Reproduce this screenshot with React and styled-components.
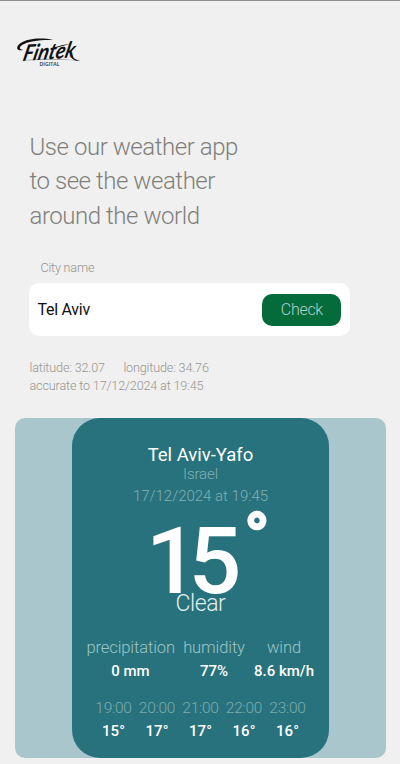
import React from "react";
import styled, { createGlobalStyle } from "styled-components";

const GlobalStyle = createGlobalStyle`
  * { box-sizing: border-box; }
  body { margin: 0; background: #f0f0f0; font-family: Roboto, sans-serif; font-weight: 300; }
  h1, p { margin: 0; font-weight: inherit; }
`;

const Page = styled.div`
  height: 764px;
  overflow: hidden;
  border-top: 1px solid #8d8d8d;
  background: #f0f0f0;
  display: flex;
  flex-direction: column;
`;

const Header = styled.header`
  height: 129px;
  padding: 33px 0 0 14px;
`;

const LogoArt = styled.svg`
  display: block;
  width: 70px;
  height: 36px;
  overflow: visible;
`;

const Intro = styled.section`
  padding-left: 29.5px;
`;

const Title = styled.h1`
  width: 240px;
  height: 103px;
  font-size: 24px;
  line-height: 34.3px;
  letter-spacing: -0.45px;
  color: #7f7f7a;
`;

const Form = styled.form`
  width: 321px;
  margin: 24px 0 0 29.4px;
`;

const Label = styled.label`
  display: block;
  padding-left: 11px;
  height: 26px;
  line-height: 21px;
  font-size: 12.6px;
  letter-spacing: -0.18px;
  color: #93938e;
`;

const SearchBox = styled.div`
  height: 53px;
  border-radius: 10px;
  background: #fff;
  display: flex;
  align-items: center;
  padding: 0 9px 0 8px;
`;

const CityInput = styled.input`
  flex: 1;
  min-width: 0;
  border: 0;
  padding: 0;
  outline: none;
  background: transparent;
  font: 400 16px Roboto, sans-serif;
  letter-spacing: -0.25px;
  color: #111;
`;

const CheckButton = styled.button`
  width: 79px;
  height: 32px;
  border: 0;
  padding: 0;
  border-radius: 10px;
  background: #046c3b;
  color: #b4cfcf;
  font: 300 16px Roboto, sans-serif;
  letter-spacing: -0.3px;
`;

const Meta = styled.section`
  padding: 23px 0 0 29.5px;
  height: 82px;
  font-size: 12.6px;
  line-height: 18.3px;
  letter-spacing: -0.15px;
  color: #969691;
`;

const Coordinates = styled.div`
  display: flex;
  gap: 18.5px;
`;

const Backdrop = styled.section`
  width: 371px;
  height: 339.5px;
  margin-left: 15px;
  border-radius: 10px;
  background: #a9c6cc;
  display: flex;
  justify-content: center;
`;

const Card = styled.article`
  width: 257px;
  height: 339.5px;
  border-radius: 28px;
  background: #27727c;
  color: #fff;
  padding-top: 27px;
  display: flex;
  flex-direction: column;
  align-items: center;
  text-align: center;
`;

const City = styled.p`
  font-size: 18.5px;
  font-weight: 400;
  line-height: 20px;
`;

const Country = styled.p`
  font-size: 15px;
  line-height: 18px;
  letter-spacing: -0.1px;
  color: #82b0b4;
`;

const Timestamp = styled.p`
  margin-top: 3px;
  font-size: 15px;
  line-height: 20px;
  color: #82b0b4;
`;

const Temperature = styled.div`
  display: flex;
  height: 84px;
  margin-top: 1px;
  padding-left: 14px;
  font-size: 93px;
  line-height: 110px;
  font-weight: 500;
  letter-spacing: -10px;
`;

const Degree = styled.span`
  margin-left: 13px;
  font-size: 65px;
  line-height: 60px;
  letter-spacing: 0;
  -webkit-text-stroke: 2.4px #fff;
`;

const Condition = styled.p`
  font-size: 23px;
  line-height: 26px;
  letter-spacing: -0.45px;
  color: #e4eff0;
`;

const Stats = styled.div`
  display: flex;
  gap: 8px;
  margin-top: 19px;
`;

const Stat = styled.div`
  width: ${(p) => p.$width}px;
  white-space: nowrap;
`;

const StatLabel = styled.p`
  font-size: 16.5px;
  line-height: 24px;
  letter-spacing: -0.1px;
  color: #9fc5c8;
`;

const Value = styled.p`
  font-size: 15px;
  line-height: 23px;
  font-weight: 500;
`;

const Hours = styled.div`
  display: flex;
  margin-top: 14px;
`;

const Hour = styled.div`
  width: 43.5px;
`;

const HourLabel = styled.p`
  font-size: 15.5px;
  line-height: 23px;
  letter-spacing: -0.25px;
  color: #7eacb0;
`;

const stats = [
  { label: "precipitation", value: "0 mm", width: 88 },
  { label: "humidity", value: "77%", width: 63 },
  { label: "wind", value: "8.6 km/h", width: 61 },
];

const hours = [
  ["19:00", 15],
  ["20:00", 17],
  ["21:00", 17],
  ["22:00", 16],
  ["23:00", 16],
];

function Logo() {
  return (
    <LogoArt viewBox="0 0 70 36" role="img" aria-label="Fintek Digital">
      <path d="M9 16C3 17.5 1 13.5 6 9.5C14 4 28 3.5 39 6C28 5.4 14 7 8 11Q3 15 9 16Z" fill="#111" />
      <path d="M12 26Q37 23.5 65 26.5Q38 25 12 26.5Z" fill="#999" />
      <text transform="translate(8 27) rotate(-4) skewX(-17)" fontFamily="Lato, sans-serif" fontStyle="italic" fontWeight="700" fontSize="22" textLength="52" lengthAdjust="spacingAndGlyphs" fill="#111">Fintek</text>
      <path d="M40 13.5Q49 10.5 57 9.8Q48 12 40 14.6ZM58 21Q60 26.5 66 26Q61 28.5 57 23Z" fill="#111" />
      <text x="25.5" y="32" fontFamily="Open Sans, sans-serif" fontWeight="600" fontSize="5.2" textLength="20" fill="#333">DIGITAL</text>
    </LogoArt>
  );
}

export default function App() {
  return (
    <Page>
      <GlobalStyle />
      <Header><Logo /></Header>
      <Intro>
        <Title>Use our weather app<br />to see the weather<br />around the world</Title>
      </Intro>
      <Form onSubmit={(e) => e.preventDefault()}>
        <Label htmlFor="city">City name</Label>
        <SearchBox>
          <CityInput id="city" defaultValue="Tel Aviv" />
          <CheckButton>Check</CheckButton>
        </SearchBox>
      </Form>
      <Meta>
        <Coordinates><span>latitude: 32.07</span><span>longitude: 34.76</span></Coordinates>
        <p>accurate to 17/12/2024 at 19:45</p>
      </Meta>
      <Backdrop>
        <Card>
          <City>Tel Aviv-Yafo</City>
          <Country>Israel</Country>
          <Timestamp>17/12/2024 at 19:45</Timestamp>
          <Temperature>15<Degree>°</Degree></Temperature>
          <Condition>Clear</Condition>
          <Stats>
            {stats.map((s) => (
              <Stat key={s.label} $width={s.width}>
                <StatLabel>{s.label}</StatLabel>
                <Value>{s.value}</Value>
              </Stat>
            ))}
          </Stats>
          <Hours>
            {hours.map(([time, temp]) => (
              <Hour key={time}>
                <HourLabel>{time}</HourLabel>
                <Value>{temp}°</Value>
              </Hour>
            ))}
          </Hours>
        </Card>
      </Backdrop>
    </Page>
  );
}
